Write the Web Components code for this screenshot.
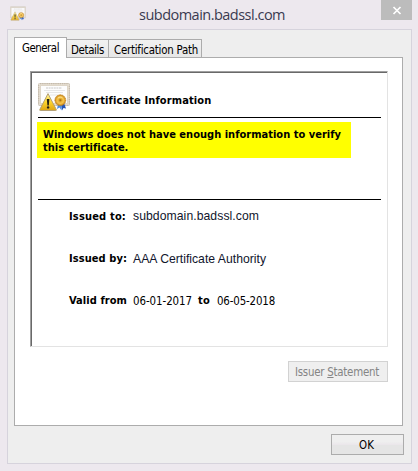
<!DOCTYPE html>
<html lang="en"><head><meta charset="utf-8"><title>subdomain.badssl.com</title>
<style>html,body{margin:0;height:100%;overflow:hidden}</style></head>
<body><cert-dialog></cert-dialog>
<script>
const define=(name,html,ready)=>customElements.define(name,class extends HTMLElement{
  connectedCallback(){
    if(this.shadowRoot)return;
    this.attachShadow({mode:'open'}).innerHTML=html;
    if(ready)ready(this);
  }
});

// Text run tracked to the width given in its "w" attribute.
define('fit-text',`<style>:host{display:block;white-space:nowrap;height:14px;line-height:14px}span{display:inline-block}</style><span><slot></slot></span>`,el=>{
  const s=el.shadowRoot.querySelector('span'),n=el.textContent.length;
  const d=(+el.getAttribute('w')-s.getBoundingClientRect().width)/n;
  s.style.letterSpacing=d+'px';
  el.style.width=el.getAttribute('w')+'px';
});

define('cert-icon',`<style>:host{display:block}svg{display:block;width:100%;height:100%}</style>
<svg viewBox="0 0 32 28">
<defs><linearGradient id="w" x2="0" y2="1"><stop stop-color="#fff3a0"/><stop offset=".5" stop-color="#fdd52d"/><stop offset="1" stop-color="#dfa413"/></linearGradient>
<radialGradient id="g"><stop stop-color="#9c6208"/><stop offset=".32" stop-color="#e8b033"/><stop offset=".6" stop-color="#f6c34a"/><stop offset="1" stop-color="#c98617"/></radialGradient></defs>
<rect x=".5" y=".5" width="31" height="22" rx="1" fill="#ded6c8" stroke="#c3b9aa"/>
<rect x="1" y="1" width="30" height="21" fill="none" stroke="#efe9df" stroke-dasharray="1 1.2"/>
<rect x="3" y="3" width="26" height="17" fill="#fdfdfd"/>
<path d="M8 5H24" stroke="#c8c8c8" stroke-dasharray="2 .6"/><path d="M6 7.5H27M8 9.5H25M12 12H20" stroke="#e6e6e6"/>
<path d="M20 21L19 26L21.5 24.5L23.5 27.5L24 21Z" fill="#4d8de0"/><path d="M23.5 21L24 27.5L25.5 25L28 25.5L26 20Z" fill="#2454b7"/>
<circle cx="22.3" cy="17.2" r="5.4" fill="url(#g)" stroke="#bd7b13" stroke-width=".8" stroke-dasharray="1.4 .5"/>
<path d="M20 15.2A3 3 0 0 1 24.5 15" fill="none" stroke="#fff0b0" stroke-width=".7"/>
<path d="M10 10.6L18.3 26.6Q18.6 27.5 17.8 27.5H2.3Q1.4 27.5 1.8 26.6Z" fill="url(#w)" stroke="#b5a176" stroke-width="1"/>
<path d="M8.8 16H11.4L10.8 22.4H9.4Z" fill="#241f13"/><circle cx="10.1" cy="24.4" r="1.2" fill="#241f13"/>
</svg>`);

define('tab-label',`<style>
:host{display:flex;box-sizing:border-box;height:18px;padding:3px 0 0 4px;background:linear-gradient(#f1f1f1,#e7e7e7);border:1px solid #acacac;border-bottom:0;border-left:0;margin-top:2px;width:var(--w)}
:host([active]){height:21px;margin:0 0 -1px;padding:3px 0 0 7px;background:#fff;border-left:1px solid #acacac;position:relative}
</style><slot></slot>`);

define('push-button',`<style>
:host{display:flex;box-sizing:border-box;justify-content:center;height:21px;padding:3px 2px 0 0;border:1px solid #acacac;background:linear-gradient(#efefef 0 35%,#ebe7eb 50%,#e5e5e5 55%)}
:host([disabled]){color:#858585;background:#efefef;border-color:#d2d2d2}
</style><slot></slot>`);

define('info-row',`<style>
:host{display:flex;height:14px}
.k{width:var(--k,64px);font-weight:bold;font-size:11px}
</style><div class="k"><slot name="k"></slot></div><slot></slot>`);

define('cert-card',`<style>
:host{display:block;box-sizing:border-box;width:358px;height:276px;border:1px solid;border-color:#a0a0a0 #e3e3e3 #e3e3e3 #a0a0a0;color:#000}
.in{box-sizing:border-box;height:274px;border-top:1px solid #696969;border-left:1px solid #696969;padding:10px 6px 0 6px}
.head{display:flex;height:34px}
cert-icon{width:32px;height:28px;margin:0 11px 0 0}
.head fit-text{margin-top:11px;font-weight:bold;font-size:11px}
hr{border:0;height:1px;background:#000;margin:0;width:343px}
.warn{box-sizing:border-box;width:314px;height:36px;margin:4px 0 41px -1px;padding:6px 0 0 6px;background:#ff0;font-weight:bold;font-size:11px}
.warn fit-text{height:13px}
.rows{display:flex;flex-direction:column;gap:28px;padding:10px 0 0 31px}
.a{font:12.2px "Liberation Sans",Arial,sans-serif;color:#10152c;line-height:14px}
.first{margin-top:-1px}
b{display:block;margin:0 7px 0 6px;font-size:11px}
</style><div class="in">
<div class="head"><cert-icon></cert-icon><fit-text w="130">Certificate Information</fit-text></div><hr>
<div class="warn"><fit-text w="298">Windows does not have enough information to verify</fit-text><fit-text w="85">this certificate.</fit-text></div><hr>
<div class="rows">
<info-row><fit-text slot="k" w="57">Issued to:</fit-text><fit-text class="a first" w="126">subdomain.badssl.com</fit-text></info-row>
<info-row><fit-text slot="k" w="58">Issued by:</fit-text><fit-text class="a" w="133">AAA Certificate Authority</fit-text></info-row>
<info-row><fit-text slot="k" w="58">Valid from</fit-text><fit-text w="59">06-01-2017</fit-text><b><fit-text w="12">to</fit-text></b><fit-text w="58">06-05-2018</fit-text></info-row>
</div></div>`);

define('cert-dialog',`<style>
:host{display:block;box-sizing:border-box;width:418px;height:471px;background:#ede8ee;padding:0 6px 0 7px;font:11.4px "DejaVu Sans Condensed","DejaVu Sans",sans-serif;font-stretch:condensed;color:#000}
.bar{display:flex;height:29px}
.bar cert-icon{width:16px;height:15px;margin:6px 0 0 3px;opacity:.85}
.bar fit-text{margin:5px 0 0 113px;height:20px;line-height:20px;font:14.5px/20px "Open Sans","Noto Sans",sans-serif;font-stretch:normal;color:#3a3a50}
.x{width:31px;height:20px;background:#bcbcbc;margin-left:auto}
.x svg{display:block}
.frame{box-sizing:border-box;width:405px;height:435px;border:1px solid #d6d3dc;background:#eee;padding:7px 7px 0 6px}
.tabs{display:flex;align-items:flex-start;height:20px}
.panel{box-sizing:border-box;width:389px;height:369px;border:1px solid #acacac;background:#fff;padding:13px 14px 0 15px}
.panel push-button{width:100px;margin:14px 0 0 auto}
.foot{display:flex;justify-content:flex-end;padding-top:8px}
.foot push-button{width:73px}
</style>
<div class="bar"><cert-icon></cert-icon><fit-text w="146">subdomain.badssl.com</fit-text>
<div class="x"><svg width="31" height="20"><path d="M12.5 7L19.5 14M19.5 7L12.5 14" stroke="#fff" stroke-width="1.7"/></svg></div></div>
<div class="frame"><div class="tabs">
<tab-label active style="--w:53px"><fit-text w="37">General</fit-text></tab-label>
<tab-label style="--w:42px"><fit-text w="33">Details</fit-text></tab-label>
<tab-label style="--w:93px"><fit-text w="84" style="margin-left:1px">Certification Path</fit-text></tab-label></div>
<div class="panel"><cert-card></cert-card><push-button disabled><fit-text w="84">Issuer <u>S</u>tatement</fit-text></push-button></div>
<div class="foot"><push-button><fit-text w="15">OK</fit-text></push-button></div></div>`);
</script></body></html>
